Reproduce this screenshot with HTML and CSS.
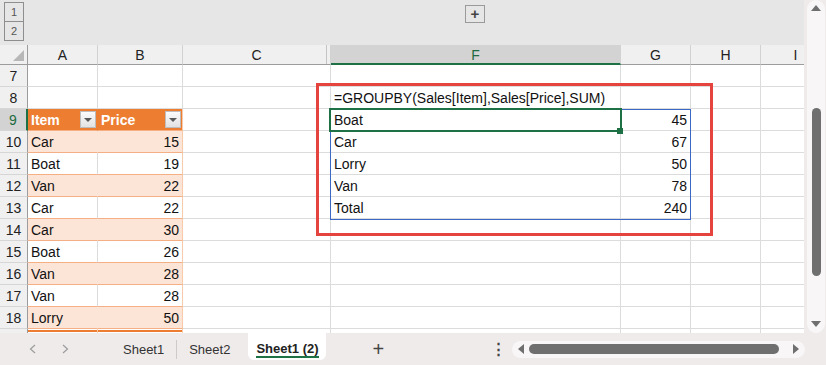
FILE: index.html
```html
<!DOCTYPE html>
<html lang="en">
<head>
  <meta charset="UTF-8">
  <title>Sheet1 (2)</title>
  <link rel="stylesheet" href="styles.css">
</head>
<body>
  <div class="main">
    <div class="work">
      <div class="band">
        <div class="levels"><span>1</span><span>2</span></div>
        <div class="expand">+</div>
      </div>

      <div class="grid">
        <div class="row head">
          <div class="c corner"></div>
          <div class="c">A</div>
          <div class="c">B</div>
          <div class="c hidden-after">C</div>
          <div class="c on">F</div>
          <div class="c">G</div>
          <div class="c">H</div>
          <div class="c">I</div>
        </div>
        <div class="row">
          <div class="c rh">7</div><div class="c"></div><div class="c"></div><div class="c"></div><div class="c"></div><div class="c"></div><div class="c"></div><div class="c"></div>
        </div>
        <div class="row">
          <div class="c rh">8</div><div class="c"></div><div class="c"></div><div class="c"></div><div class="c">=GROUPBY(Sales[Item],Sales[Price],SUM)</div><div class="c"></div><div class="c"></div><div class="c"></div>
        </div>
        <div class="row">
          <div class="c rh on">9</div>
          <div class="c th">Item<span class="fb"></span></div>
          <div class="c th tb">Price<span class="fb"></span></div>
          <div class="c"></div><div class="c">Boat</div><div class="c n">45</div><div class="c"></div><div class="c"></div>
        </div>
        <div class="row">
          <div class="c rh">10</div><div class="c t t1">Car</div><div class="c t t1 tb n">15</div><div class="c"></div><div class="c">Car</div><div class="c n">67</div><div class="c"></div><div class="c"></div>
        </div>
        <div class="row">
          <div class="c rh">11</div><div class="c t">Boat</div><div class="c t tb n">19</div><div class="c"></div><div class="c">Lorry</div><div class="c n">50</div><div class="c"></div><div class="c"></div>
        </div>
        <div class="row">
          <div class="c rh">12</div><div class="c t t1">Van</div><div class="c t t1 tb n">22</div><div class="c"></div><div class="c">Van</div><div class="c n">78</div><div class="c"></div><div class="c"></div>
        </div>
        <div class="row">
          <div class="c rh">13</div><div class="c t">Car</div><div class="c t tb n">22</div><div class="c"></div><div class="c">Total</div><div class="c n">240</div><div class="c"></div><div class="c"></div>
        </div>
        <div class="row">
          <div class="c rh">14</div><div class="c t t1">Car</div><div class="c t t1 tb n">30</div><div class="c"></div><div class="c"></div><div class="c"></div><div class="c"></div><div class="c"></div>
        </div>
        <div class="row">
          <div class="c rh">15</div><div class="c t">Boat</div><div class="c t tb n">26</div><div class="c"></div><div class="c"></div><div class="c"></div><div class="c"></div><div class="c"></div>
        </div>
        <div class="row">
          <div class="c rh">16</div><div class="c t t1">Van</div><div class="c t t1 tb n">28</div><div class="c"></div><div class="c"></div><div class="c"></div><div class="c"></div><div class="c"></div>
        </div>
        <div class="row">
          <div class="c rh">17</div><div class="c t">Van</div><div class="c t tb n">28</div><div class="c"></div><div class="c"></div><div class="c"></div><div class="c"></div><div class="c"></div>
        </div>
        <div class="row">
          <div class="c rh">18</div><div class="c t t1">Lorry</div><div class="c t t1 tb n">50</div><div class="c"></div><div class="c"></div><div class="c"></div><div class="c"></div><div class="c"></div>
        </div>
        <div class="row cut">
          <div class="c rh"></div><div class="c tend"></div><div class="c tend"></div><div class="c"></div><div class="c"></div><div class="c"></div><div class="c"></div><div class="c"></div>
        </div>

        <div class="red-box"></div>
        <div class="spill"></div>
        <div class="sel"><i></i></div>
      </div>
    </div>

    <div class="vscroll">
      <div class="track">
        <span class="arr up"></span>
        <span class="vthumb"></span>
        <span class="arr down"></span>
      </div>
    </div>
  </div>

  <div class="tabs">
    <svg class="chev" width="7" height="10" viewBox="0 0 7 10"><path d="M6 1 L1.5 5 L6 9" fill="none" stroke="#9c9c9c" stroke-width="1.2"/></svg>
    <svg class="chev next" width="7" height="10" viewBox="0 0 7 10"><path d="M1 1 L5.5 5 L1 9" fill="none" stroke="#9c9c9c" stroke-width="1.2"/></svg>
    <span class="tab first">Sheet1</span>
    <span class="sep"></span>
    <span class="tab">Sheet2</span>
    <span class="tab active"><b>Sheet1 (2)</b></span>
    <span class="add">+</span>
    <span class="more">⋮</span>
    <div class="hscroll">
      <span class="arr left"></span>
      <span class="hthumb"></span>
      <span class="arr right"></span>
    </div>
  </div>
</body>
</html>
```

FILE: styles.css
```css
* {
  box-sizing: border-box;
  margin: 0;
  padding: 0;
}
body {
  width: 826px;
  height: 365px;
  overflow: hidden;
  font-family: "Liberation Sans", Arial, sans-serif;
  font-size: 14px;
  color: #111;
  background-color: #efebeb;
}
.main {
  display: flex;
  height: 333px;
}
.work {
  width: 804px;
  overflow: hidden;
  background-color: white;
}
.band {
  height: 45px;
  background-color: #e6e6e6;
  display: flex;
  align-items: flex-start;
  padding: 2px 0 0 4px;
}
.levels {
  display: flex;
  flex-direction: column;
}
.levels span {
  width: 20px;
  height: 20px;
  border: 1px solid #8e8e8e;
  font-size: 11px;
  line-height: 18px;
  color: #555;
  text-align: center;
}
.levels span + span {
  margin-top: -1px;
}
.expand {
  margin: 3px 0 0 441px;
  width: 20px;
  height: 18px;
  border: 1px solid #9a9a9a;
  font-size: 15px;
  font-weight: bold;
  line-height: 15px;
  text-align: center;
  color: #444;
}
.grid {
  position: relative;
  width: 831px;
}
.row {
  display: grid;
  grid-template-columns: 28px 70px 85px 148px 290px 70px 70px 70px;
  height: 22px;
}
.c {
  border-right: 1px solid #dcdcdc;
  border-bottom: 1px solid #dcdcdc;
  padding: 0 3px;
  line-height: 22px;
  white-space: nowrap;
  overflow: hidden;
}
.n {
  text-align: right;
}
.head {
  height: 20px;
}
.head .c {
  background-color: #f0f0f0;
  border-right-color: #d2d2d2;
  border-bottom: 1px solid #9c9c9c;
  text-align: center;
  line-height: 20px;
  color: #222;
}
.head .corner {
  position: relative;
  border-right-color: #9c9c9c;
}
.head .corner::after {
  content: "";
  position: absolute;
  right: 3px;
  bottom: 3px;
  border-left: 11px solid transparent;
  border-bottom: 11px solid #b7b7b7;
}
.head .hidden-after {
  box-shadow: inset -3px 0 0 #f0f0f0, inset -4px 0 0 #c4c4c4;
}
.head .on {
  background-color: #d3d3d3;
  color: #1d6b40;
  border-bottom: 2px solid #1e7145;
}
.rh {
  background-color: #f0f0f0;
  border-right-color: #9c9c9c;
  border-bottom-color: #d6d6d6;
  padding: 0;
  text-align: center;
  color: #222;
}
.rh.on {
  background-color: #d3d3d3;
  color: #1d6b40;
  border-right: 2px solid #1e7145;
}
.th {
  display: flex;
  justify-content: space-between;
  align-items: center;
  padding: 0 1px 0 3px;
  background-color: #ed7d31;
  color: white;
  font-weight: bold;
  border-right-color: #ed7d31;
  border-bottom-color: #f4b084;
}
.th.tb {
  border-right-color: #f8cbad;
}
.fb {
  position: relative;
  width: 16px;
  height: 17px;
  border: 1px solid #bdbdbd;
  background: linear-gradient(#fbfbfb, #e2e2e2);
}
.fb::after {
  content: "";
  position: absolute;
  left: 3px;
  top: 6px;
  border-left: 4px solid transparent;
  border-right: 4px solid transparent;
  border-top: 4px solid #595959;
}
.t {
  border-bottom-color: #f4b084;
}
.t1 {
  background-color: #fce4d6;
  border-right-color: #fce4d6;
}
.tb {
  border-right-color: #f8cbad;
}
.cut {
  height: 4px;
}
.cut .c {
  border-bottom: none;
}
.tend {
  background: linear-gradient(white 1px, #ed7d31 1px, #ed7d31 3px, white 3px);
  border-right-color: #f8cbad;
}
.red-box {
  position: absolute;
  left: 316px;
  top: 38px;
  width: 397px;
  height: 153px;
  border: 3px solid #e5433d;
}
.spill {
  position: absolute;
  left: 330px;
  top: 64px;
  width: 361px;
  height: 111px;
  border: 1px solid #3b68c4;
}
.sel {
  position: absolute;
  left: 329px;
  top: 63px;
  width: 293px;
  height: 24px;
  border: 2px solid #1e7145;
}
.sel i {
  position: absolute;
  right: -3px;
  bottom: -4px;
  width: 6px;
  height: 6px;
  background-color: #1e7145;
}
.vscroll {
  width: 22px;
  padding-left: 3px;
}
.track {
  height: 333px;
  width: 18px;
  border-radius: 9px;
  background-color: #f8f6f6;
  display: flex;
  flex-direction: column;
  align-items: center;
}
.arr {
  width: 0;
  height: 0;
}
.arr.up {
  margin-top: 5px;
  border-left: 5px solid transparent;
  border-right: 5px solid transparent;
  border-bottom: 6px solid #6f6f6f;
}
.vthumb {
  margin-top: 97px;
  width: 9px;
  height: 168px;
  border-radius: 5px;
  background-color: #6f6f6f;
}
.arr.down {
  margin-top: auto;
  margin-bottom: 6px;
  border-left: 5px solid transparent;
  border-right: 5px solid transparent;
  border-top: 6px solid #6f6f6f;
}
.tabs {
  height: 32px;
  display: flex;
  align-items: center;
  padding-left: 29px;
  font-size: 13px;
  color: #333;
}
.chev.next {
  margin-left: 26px;
}
.tab.first {
  margin-left: 54px;
}
.sep {
  width: 1px;
  height: 19px;
  margin: 0 12px;
  background-color: #cfcaca;
}
.tab.active {
  align-self: flex-start;
  margin-left: 18px;
  width: 78px;
  height: 27px;
  padding: 8px 0 0 8px;
  border-radius: 0 0 6px 6px;
  background-color: white;
  color: #222;
}
.tab.active b {
  display: inline-block;
  height: 17px;
  border-bottom: 2px solid #1e7145;
}
.add {
  margin-left: 46px;
  font-size: 20px;
  font-weight: 300;
  color: #444;
}
.more {
  margin-left: 107px;
  font-size: 15px;
  font-weight: bold;
  color: #444;
}
.hscroll {
  margin-left: 6px;
  width: 293px;
  height: 17px;
  border-radius: 9px;
  background-color: #f8f6f6;
  display: flex;
  align-items: center;
  padding: 0 6px;
}
.arr.left {
  border-top: 5px solid transparent;
  border-bottom: 5px solid transparent;
  border-right: 6px solid #6f6f6f;
}
.hthumb {
  margin-left: 5px;
  width: 250px;
  height: 10px;
  border-radius: 5px;
  background-color: #6f6f6f;
}
.arr.right {
  margin-left: auto;
  border-top: 5px solid transparent;
  border-bottom: 5px solid transparent;
  border-left: 6px solid #6f6f6f;
}
```
